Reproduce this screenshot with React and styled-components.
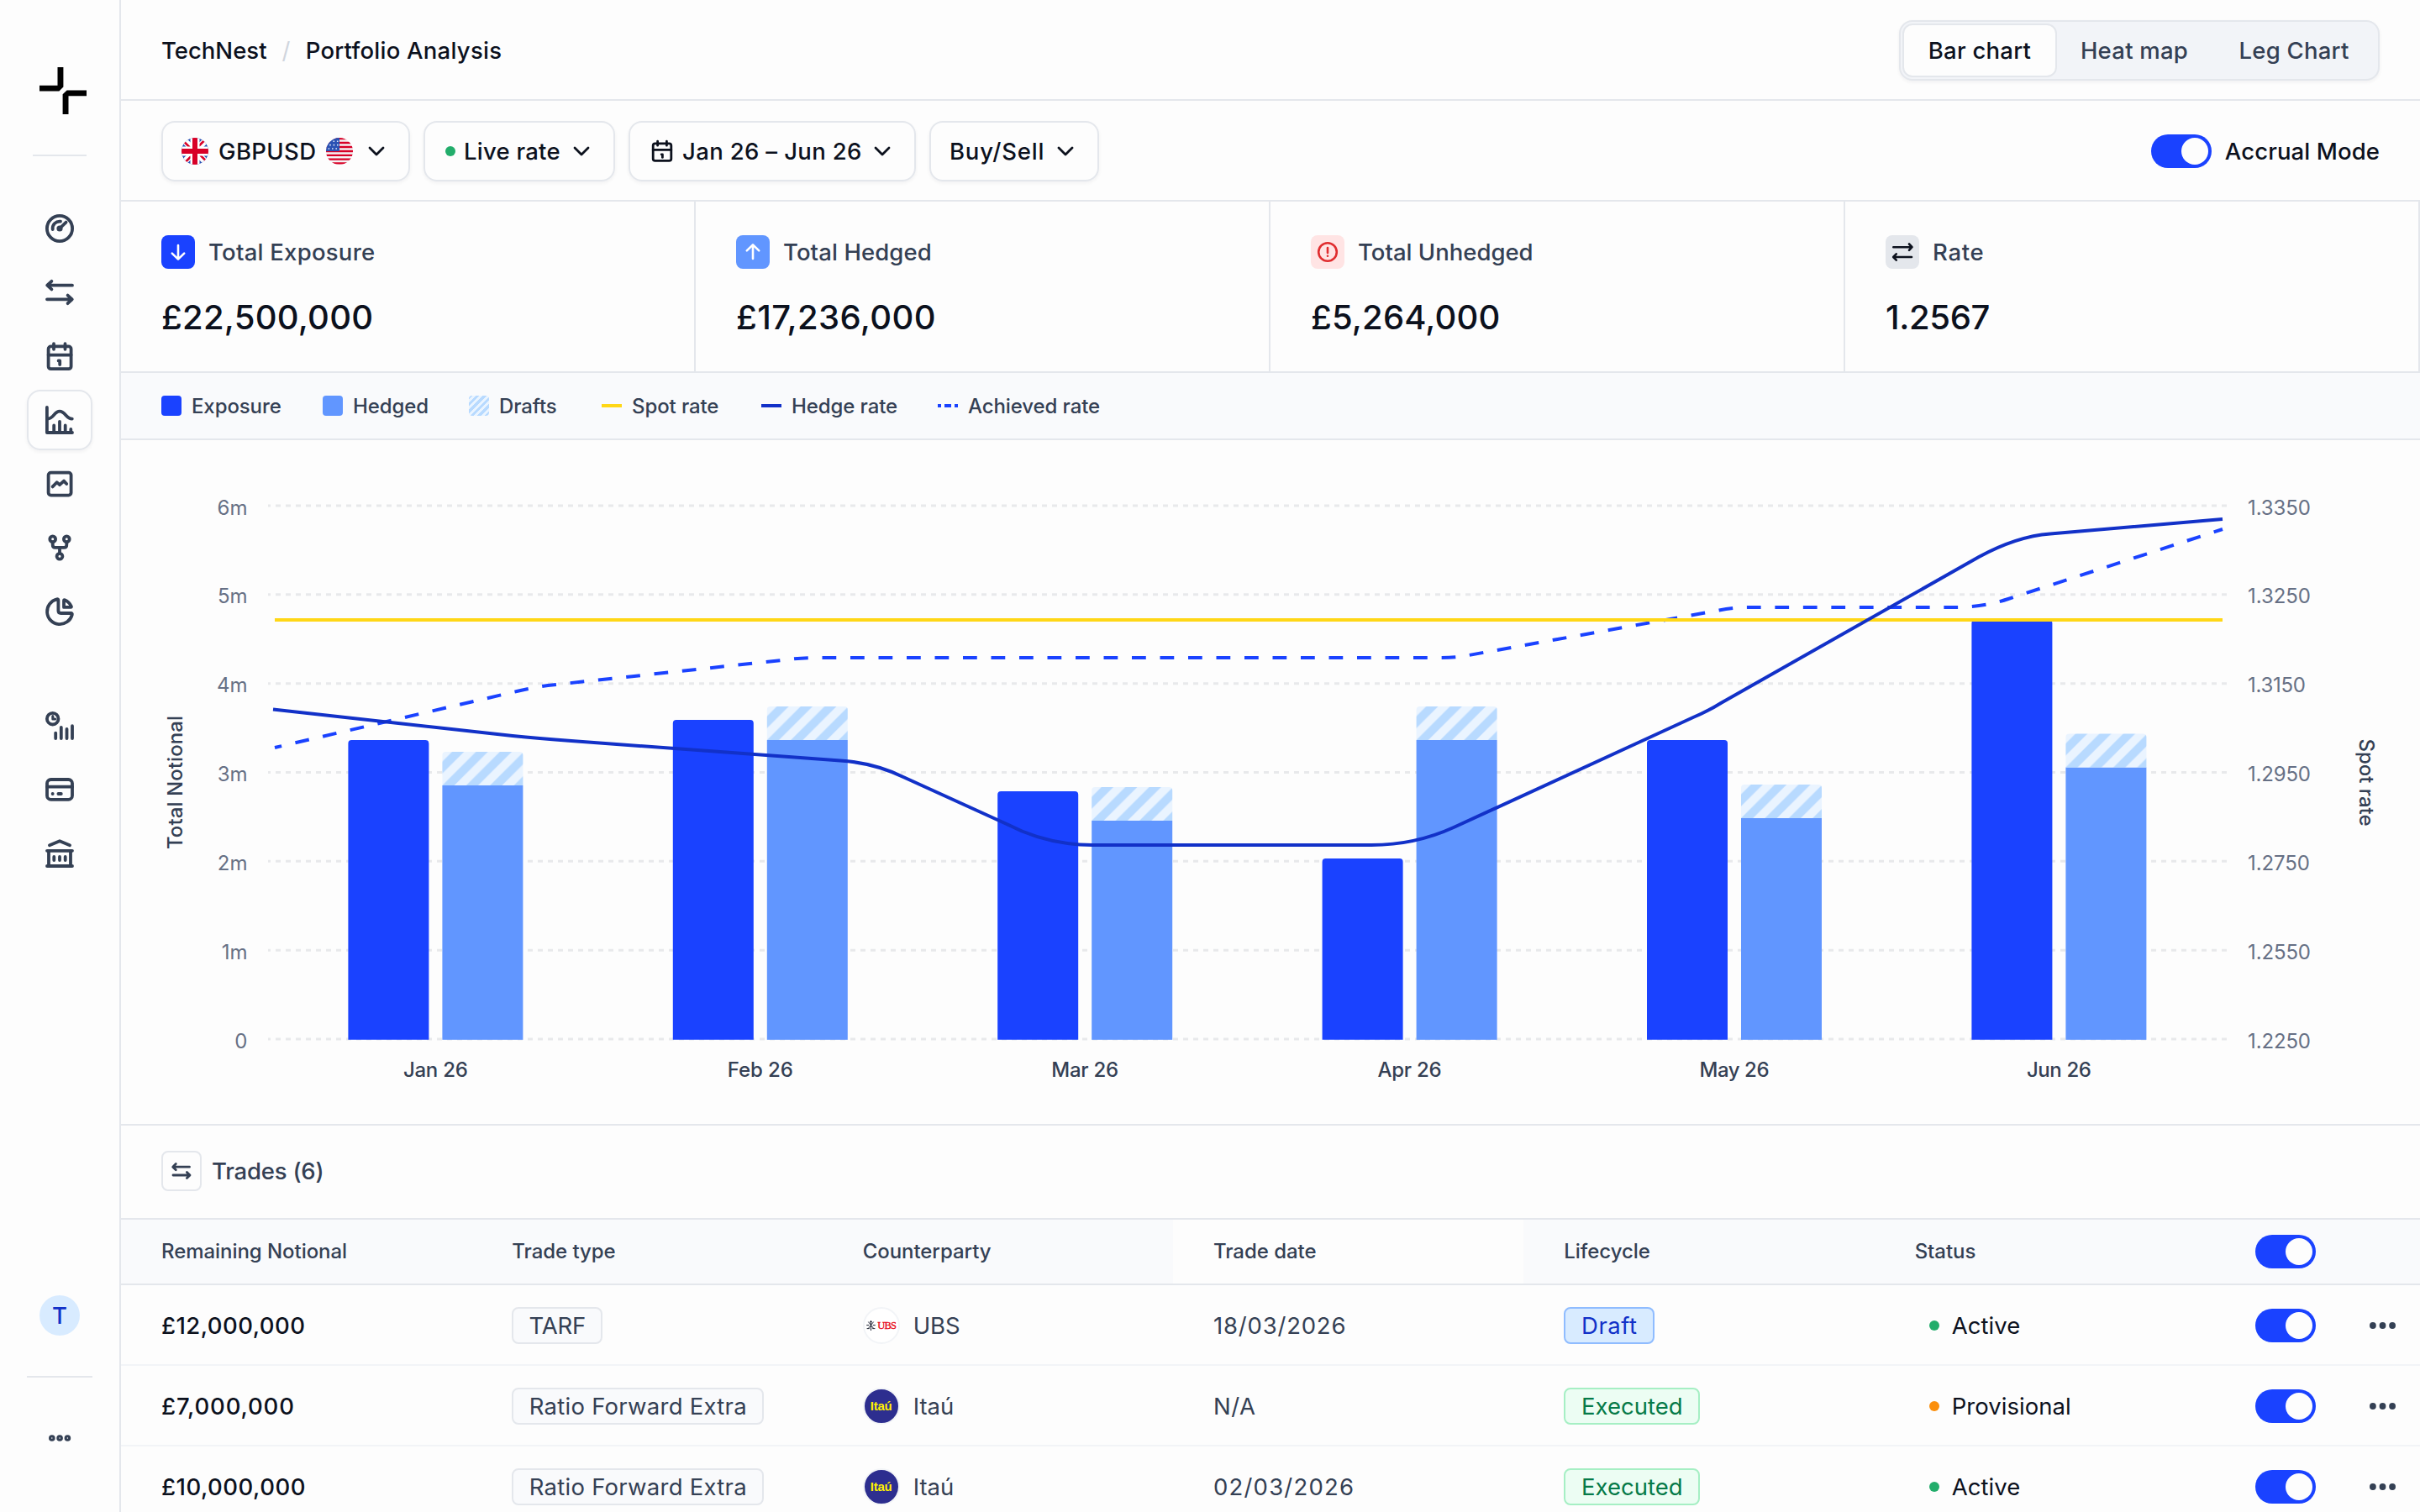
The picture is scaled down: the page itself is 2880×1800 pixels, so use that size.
import React from "react";
import styled, { createGlobalStyle, css } from "styled-components";

const c = {
  bg: "#fdfdfd",
  line: "#e4e7ec",
  soft: "#f2f4f7",
  panel: "#f9fafc",
  ink: "#0c111d",
  text: "#344054",
  muted: "#667085",
  blue: "#1a42ff",
  deep: "#1231c8",
  sky: "#6196ff",
  green: "#22ad6b",
  orange: "#fb8f0c",
  yellow: "#ffd716",
};

const Global = createGlobalStyle`
  * { box-sizing: border-box; }
  html, body { margin: 0; background: ${c.bg}; }
  body {
    font-family: Inter, "Liberation Sans", sans-serif;
    font-size: 28px;
    line-height: 36px;
    color: ${c.text};
    overflow: hidden;
  }
  svg { display: block; flex: none; }
`;

const Page = styled.div`
  display: grid;
  grid-template-columns: 144px 1fr;
  width: 2880px;
  height: 1800px;
  overflow: hidden;
`;

const T = styled.span`
  white-space: nowrap;
  font-weight: ${(p) => p.$w || 400};
  font-size: ${(p) => p.$size || 27.5}px;
  letter-spacing: ${(p) => p.$ls ?? 0.25}px;
  color: ${(p) => p.$color || "inherit"};
`;

/* ---------- Sidebar ---------- */

const Sidebar = styled.nav`
  display: flex;
  flex-direction: column;
  align-items: center;
  border-right: 2px solid ${c.line};
  height: 1800px;
`;

const LogoBox = styled.div`
  padding: 80px 0 48px 8px;
`;

const Rule = styled.div`
  width: ${(p) => p.$width}px;
  height: 2px;
  background: ${c.line};
`;

const NavList = styled.div`
  display: flex;
  flex-direction: column;
  align-items: center;
  gap: 4px;
  margin-top: ${(p) => p.$top}px;
`;

const NavItem = styled.div`
  display: flex;
  align-items: center;
  justify-content: center;
  width: 78px;
  height: 72px;
  border-radius: 16px;
  border: 2px solid transparent;
  ${(p) =>
    p.$active &&
    css`
      border-color: ${c.line};
      box-shadow: 0 2px 4px rgba(16, 24, 40, 0.05);
    `}
`;

const Avatar = styled.div`
  display: flex;
  align-items: center;
  justify-content: center;
  width: 48px;
  height: 48px;
  margin: auto 0 48px;
  border-radius: 50%;
  background: #d8ebff;
`;

const MoreBox = styled.div`
  padding: 64px 0 80px;
`;

const Stroke = ({ size = 40, w = 3.8, color = c.text, children, box = size }) => (
  <svg
    width={size}
    height={size}
    viewBox={`0 0 ${box} ${box}`}
    fill="none"
    stroke={color}
    strokeWidth={w}
    strokeLinecap="round"
    strokeLinejoin="round"
  >
    {children}
  </svg>
);

const navIcons = {
  gauge: (
    <>
      <circle cx="20" cy="20" r="15.1" />
      <path d="M11.7 21c-.6-5.4 3.6-10 9.3-9.4" />
      <path d="M21 19l6.6-6.4" />
      <circle cx="20" cy="20" r="1.7" />
    </>
  ),
  swap: (
    <>
      <path d="M35 11.7H5.4M10.4 6.8L5.2 11.7l5.2 4.7" />
      <path d="M5 28.3h29.6M29.6 23.6l5.2 4.7-5.2 4.9" />
    </>
  ),
  calendar: (
    <>
      <rect x="6.6" y="8.4" width="27" height="26.8" rx="3" />
      <path d="M6.6 18.6h27M13 5.2v6.6M26.5 5.2v6.6M18.6 25.4h1.6V30" />
    </>
  ),
  chart: (
    <>
      <path d="M4.9 5v30H35" />
      <path d="M5.6 18.6c7.6 0 7.6-9 14.4-9 6.6 0 7.6 9 14.8 9" />
      <path d="M13.2 26.5V34M20 21.8V34M26.7 26.5V34M33.3 31V34" />
    </>
  ),
  picture: (
    <>
      <rect x="6.6" y="6.6" width="27" height="27" rx="3" />
      <path d="M11.6 23.4l5-5.2 3.4 3 5-4.6 3.2 3.4" />
    </>
  ),
  fork: (
    <>
      <circle cx="11.7" cy="9.7" r="3.4" />
      <circle cx="28.3" cy="9.7" r="3.4" />
      <circle cx="20" cy="30.3" r="3.4" />
      <path d="M11.7 13.5v3.2q0 3.1 3.1 3.1h10.4q3.1 0 3.1-3.1v-3.2M20 20v6.5" />
    </>
  ),
  pie: (
    <>
      <path d="M18.4 6.6v12.4q0 3 3 3h12q1.8 0 1.4 1.7A15.1 15.1 0 1 1 16.7 5.3q1.7-.4 1.7 1.3z" />
      <path d="M25 7.2v7.7h8.2q1 0 .7-1a15 15 0 0 0-7.8-7.7q-1.1-.4-1.1 1z" />
    </>
  ),
  usage: (
    <>
      <circle cx="11.7" cy="11.7" r="6.8" />
      <path strokeWidth="3" d="M11.8 8.6v3.5h2.8" />
      <path d="M15.2 28.6V35M21.8 21.8V35M28.5 23.8V35M35 20.2V35" />
    </>
  ),
  card: (
    <>
      <rect x="5" y="8" width="30" height="23.8" rx="4.6" />
      <path d="M5 16.7h30M11.6 25h.1M18.4 25h3.4" />
    </>
  ),
  bank: (
    <>
      <path d="M8 10.2l12-5 12 5M5 16.8h30M5 35h30M7 17v18M33 17v18M13.3 24v4M20 24v4M26.7 24v4" />
    </>
  ),
};

const Dots = ({ gap, r, w, hole }) => (
  <svg width={gap * 2 + r * 2 + w + 2} height="16">
    {[0, 1, 2].map((i) => (
      <circle
        key={i}
        cx={1 + r + w / 2 + i * gap}
        cy="8"
        r={r}
        fill={hole ? "none" : c.text}
        stroke={c.text}
        strokeWidth={w}
      />
    ))}
  </svg>
);

/* ---------- Header & filters ---------- */

const Main = styled.main`
  display: flex;
  flex-direction: column;
  min-width: 0;
`;

const Bar = styled.div`
  display: flex;
  align-items: center;
  justify-content: space-between;
  height: 120px;
  flex: none;
  padding: 2px 48px 0;
  border-bottom: 2px solid ${c.line};
`;

const Crumbs = styled.div`
  display: flex;
  align-items: center;
  gap: 18px;
`;

const Segments = styled.div`
  display: grid;
  grid-template-columns: 184px 184px 196px;
  width: 572px;
  height: 72px;
  padding: 2px;
  border: 2px solid ${c.line};
  border-radius: 16px;
  background: #f2f4f8;
  box-shadow: 0 2px 4px rgba(16, 24, 40, 0.05);
`;

const Segment = styled.div`
  display: flex;
  align-items: center;
  justify-content: center;
  border-radius: 12px;
  border: 2px solid ${(p) => (p.$active ? c.line : "transparent")};
  background: ${(p) => (p.$active ? c.bg : "transparent")};
`;

const Filters = styled.div`
  display: flex;
  gap: 16px;
`;

const FilterButton = styled.div`
  display: flex;
  align-items: center;
  gap: ${(p) => p.$gap || 12}px;
  width: ${(p) => p.$width}px;
  height: 72px;
  padding: 0 22px;
  border: 2px solid ${c.line};
  border-radius: 16px;
  box-shadow: 0 2px 4px rgba(16, 24, 40, 0.05);
`;

const ChevronBox = styled.span`
  margin-left: auto;
`;

const Dot = styled.span`
  width: 12px;
  height: 12px;
  flex: none;
  margin: 0 2px;
  border-radius: 50%;
  background: ${(p) => p.$color};
`;

const ModeBox = styled.div`
  display: flex;
  align-items: center;
  gap: 16px;
`;

const Track = styled.span`
  display: flex;
  justify-content: flex-end;
  width: 72px;
  height: 40px;
  padding: 4px;
  border-radius: 20px;
  background: ${c.blue};
`;

const Knob = styled.span`
  width: 32px;
  height: 32px;
  border-radius: 50%;
  background: ${c.bg};
`;

const Toggle = () => (
  <Track>
    <Knob />
  </Track>
);

const Chevron = () => (
  <ChevronBox>
    <Stroke size={32} w={2.8} color={c.ink}>
      <path d="M8 12l8 8 8-8" />
    </Stroke>
  </ChevronBox>
);

const FlagGB = () => (
  <svg width="32" height="32" viewBox="0 0 32 32">
    <defs>
      <clipPath id="gb">
        <circle cx="16" cy="16" r="16" />
      </clipPath>
    </defs>
    <g clipPath="url(#gb)">
      <path fill="#2a52b4" d="M0 0h32v32H0z" />
      <path stroke="#fff" strokeWidth="7.4" d="M0 0l32 32M32 0L0 32" />
      <path stroke="#d80027" strokeWidth="2.6" d="M0 1.6l13 13M30.4 0l-13 13M32 30.4l-13-13M1.6 32l13-13" />
      <path stroke="#fff" strokeWidth="11" d="M16 0v32M0 16h32" />
      <path stroke="#d80027" strokeWidth="6" d="M16 0v32M0 16h32" />
    </g>
  </svg>
);

const FlagUS = () => (
  <svg width="32" height="32" viewBox="0 0 32 32">
    <defs>
      <clipPath id="us">
        <circle cx="16" cy="16" r="16" />
      </clipPath>
    </defs>
    <g clipPath="url(#us)">
      <path fill="#f4f4f6" d="M0 0h32v32H0z" />
      <path
        stroke="#d80027"
        strokeWidth="2.3"
        d="M0 1.1h32M0 6h32M0 11h32M0 16h32M0 20.8h32M0 25.6h32M0 30.3h32"
      />
      <path fill="#2a52b4" d="M0 0h16v16H0z" />
      <path
        stroke="#dfe6f6"
        strokeWidth="1.6"
        strokeDasharray="1.6 2.8"
        d="M8.5 4.2h7M4.2 8.6h11M2.6 13h13"
      />
    </g>
  </svg>
);

/* ---------- KPI ---------- */

const Kpis = styled.section`
  display: grid;
  grid-template-columns: repeat(4, 684px);
  height: 204px;
  flex: none;
  border-bottom: 2px solid ${c.line};
`;

const Kpi = styled.div`
  display: flex;
  flex-direction: column;
  gap: 32px;
  padding: 40px 48px 0;
  border-right: 2px solid ${c.line};
`;

const KpiHead = styled.div`
  display: flex;
  align-items: center;
  gap: 16px;
  height: 40px;
`;

const KpiIcon = styled.span`
  width: 40px;
  height: 40px;
  border-radius: 8px;
  background: ${(p) => p.$bg};
`;

const KpiValue = styled(T)`
  line-height: 52px;
`;

const kpis = [
  {
    label: "Total Exposure",
    value: "£22,500,000",
    ls: 0.25,
    vls: 0.25,
    bg: c.blue,
    color: "#fff",
    icon: <path d="M20 12v16.5M12.8 21.6l7.2 7 7.2-7" />,
  },
  {
    label: "Total Hedged",
    value: "£17,236,000",
    ls: 0.1,
    vls: 0.4,
    bg: c.sky,
    color: "#fff",
    icon: <path d="M20 28V11.5M12.8 18.4l7.2-7 7.2 7" />,
  },
  {
    label: "Total Unhedged",
    value: "£5,264,000",
    ls: 0,
    vls: 0.15,
    bg: "#ffe4e4",
    color: "#e02d2f",
    icon: (
      <>
        <circle cx="20" cy="20" r="10.8" />
        <path d="M20 15v6M20 24.7v.1" />
      </>
    ),
  },
  {
    label: "Rate",
    value: "1.2567",
    ls: 0.7,
    vls: -0.35,
    bg: "#e4e7ec",
    color: c.ink,
    icon: <path d="M9.3 14.2h22M28 10.5l3.5 3.7-3.5 3.7M31 26h-21.7M12.7 22.3L9.2 26l3.5 3.7" />,
  },
];

/* ---------- Legend ---------- */

const Legend = styled.div`
  display: grid;
  grid-template-columns: 192px 174px 158px 190px 210px auto;
  align-items: center;
  height: 80px;
  flex: none;
  padding: 0 48px;
  background: ${c.panel};
  border-bottom: 2px solid ${c.line};
`;

const LegendItem = styled.div`
  display: flex;
  align-items: center;
  gap: 12px;
`;

const LegendLabel = styled(T)`
  padding-top: 2px;
`;

const Swatch = styled.span`
  width: 24px;
  height: ${(p) => (p.$thin ? 4 : 24)}px;
  border-radius: ${(p) => (p.$thin ? 0 : 4)}px;
  background: ${(p) => p.$fill};
`;

const legend = [
  ["Exposure", c.blue],
  ["Hedged", c.sky],
  ["Drafts", "repeating-linear-gradient(135deg, #b8daff 0 3px, #eaf4ff 3px 6px)"],
  ["Spot rate", c.yellow, true],
  ["Hedge rate", c.deep, true],
  [
    "Achieved rate",
    `linear-gradient(90deg, ${c.blue} 4px, transparent 4px 8px, ${c.blue} 8px 16px, transparent 16px 20px, ${c.blue} 20px)`,
    true,
  ],
];

/* ---------- Chart ---------- */

const ChartPanel = styled.section`
  height: 816px;
  flex: none;
  border-bottom: 2px solid ${c.line};
`;

const SvgText = styled.text`
  font-size: 24px;
  font-weight: ${(p) => p.$w || 400};
  fill: ${(p) => p.$fill || c.muted};
`;

const bars = [
  { m: "Jan 26", w: 77, e: 881, d: 895 },
  { m: "Feb 26", w: 78, e: 857, d: 841 },
  { m: "Mar 26", w: 80, e: 942, d: 937 },
  { m: "Apr 26", w: 76, e: 1022, d: 841 },
  { m: "May 26", w: 83, e: 881, d: 934 },
  { m: "Jun 26", w: 77, e: 738, d: 873.5 },
];
const ticks = [
  ["6m", "1.3350", 75],
  ["5m", "1.3250", 75],
  ["4m", "1.3150", 69],
  ["3m", "1.2950", 75],
  ["2m", "1.2750", 74],
  ["1m", "1.2550", 75],
  ["0", "1.2250", 75],
];

const Chart = () => (
  <svg width="2736" height="814" viewBox="144 524 2736 814">
    <defs>
      <pattern id="draft" width="28.4" height="28.4" patternUnits="userSpaceOnUse">
        <path fill="#b8daff" d="M0 0h28.4v28.4H0z" />
        <path
          fill="#eaf4ff"
          d="M14.2 0H28.4L0 28.4V14.2zM28.4 14.2V28.4H14.2z"
        />
      </pattern>
    </defs>
    {ticks.map(([l, r, w], i) => {
      const y = 602 + i * 105.83;
      return (
        <g key={l}>
          <path
            d={`M319 ${y}H2651`}
            stroke="#e8e9eb"
            strokeWidth="3"
            strokeDasharray="6 6"
            strokeDashoffset="3"
          />
          <SvgText x="294.5" y={y + 10.6} textAnchor="end">
            {l}
          </SvgText>
          <SvgText x="2675" y={y + 10.6} textLength={w}>
            {r}
          </SvgText>
        </g>
      );
    })}
    {bars.map((b, i) => {
      const x = 414.4 + i * 386.4;
      return (
        <g key={b.m}>
          <path
            fill={c.blue}
            d={`M${x} 1237.8V${b.e + 4}q0-4 4-4h88q4 0 4 4V1237.8z`}
          />
          <rect x={x + 112} y={b.d + 40} width="96" height={1197.8 - b.d} fill={c.sky} />
          <g transform={`translate(${x + 112} ${b.d + 40})`}>
            <path fill="url(#draft)" d="M0 0V-36q0-4 4-4h88q4 0 4 4V0z" />
          </g>
          <SvgText
            x={x + 104 - b.w / 2}
            y="1282.4"
            $w={450}
            $fill={c.text}
            textLength={b.w}
          >
            {b.m}
          </SvgText>
        </g>
      );
    })}
    <g fill="none" strokeWidth="4">
      <path
        stroke={c.blue}
        strokeDasharray="16.75 16.75"
        strokeDashoffset="8.4"
        d="M327 890L615 823Q632 819 652 816L942 784.7Q956 783 970 783H1712Q1732 783 1748 780L2046 726.5Q2064 723 2080 723H2330Q2362 722.5 2390 713L2645 630"
      />
      <path stroke={c.yellow} d="M327 738H2645" />
      <path
        stroke={c.deep}
        d="M325 844.5L610 876Q640 879 680 882L1000 905.5Q1040 908 1075 925L1198 981Q1246 1006 1300 1006H1632Q1684 1006 1730 985L2015 854Q2032 847 2048 837L2355 663Q2400 638.5 2440 635.5L2645 618"
      />
    </g>
    <SvgText
      $w={450}
      $fill={c.text}
      textLength="159"
      transform="translate(216.5 1011) rotate(-90)"
    >
      Total Notional
    </SvgText>
    <SvgText
      $w={450}
      $fill={c.text}
      textLength="104"
      transform="translate(2807.5 879.5) rotate(90)"
    >
      Spot rate
    </SvgText>
  </svg>
);

/* ---------- Trades ---------- */

const TradesHead = styled.div`
  display: flex;
  align-items: center;
  gap: 12px;
  height: 112px;
  flex: none;
  padding: 0 48px 2px;
  border-bottom: 2px solid ${c.line};
`;

const TradesIcon = styled.span`
  display: flex;
  width: 48px;
  height: 48px;
  border: 2px solid ${c.line};
  border-radius: 8px;
  align-items: center;
  justify-content: center;
`;

const Row = styled.div`
  display: grid;
  grid-template-columns: repeat(6, 417.333px) 144px 88px;
  flex: none;
  height: ${(p) => (p.$head ? 78 : 96)}px;
  padding-top: ${(p) => (p.$head ? 0 : 2)}px;
  background: ${(p) => (p.$head ? c.panel : "transparent")};
  border-bottom: 2px solid ${(p) => (p.$head ? c.line : c.soft)};
`;

const Cell = styled.div`
  display: flex;
  align-items: center;
  gap: ${(p) => p.$gap || 16}px;
  padding-left: ${(p) => (p.$center ? 0 : p.$pad || 48)}px;
  justify-content: ${(p) => (p.$center ? "center" : "flex-start")};
  background: ${(p) => (p.$plain ? c.bg : "transparent")};
`;

const tones = {
  neutral: ["#f9fafc", c.line, c.text],
  draft: ["#d8ebff", "#8fbcff", c.deep],
  executed: ["#ecfdf3", "#a6efc4", "#067a48"],
};

const Tag = styled.span`
  display: flex;
  align-items: center;
  justify-content: center;
  width: ${(p) => p.$width}px;
  height: 44px;
  border-radius: 8px;
  background: ${(p) => tones[p.$tone][0]};
  border: 2px solid ${(p) => tones[p.$tone][1]};
  color: ${(p) => tones[p.$tone][2]};
`;

const BankLogo = styled.span`
  display: flex;
  align-items: center;
  justify-content: center;
  gap: 2px;
  width: 44px;
  height: 44px;
  flex: none;
  border-radius: 50%;
  border: 2px solid ${c.soft};
  background: ${(p) => p.$bg};
`;

const UbsWord = styled.span`
  font: 400 12.5px/12px "Liberation Serif", serif;
  letter-spacing: -0.9px;
  color: #e60012;
  -webkit-text-stroke: 0.3px #e60012;
`;

const ItauWord = styled.span`
  font: 700 15px/16px "Liberation Sans", sans-serif;
  letter-spacing: -0.2px;
  color: #fff200;
`;

const Ubs = () => (
  <BankLogo $bg="#fff">
    <svg width="11" height="12" viewBox="0 0 11 12" stroke="#1b2030" strokeWidth="1" fill="none">
      <path d="M5.5 0v12M2.4 1.6l6 7.6M8.6 1.6l-6 7.6M.2 5.6h3M7.8 5.6h3M.6 9.6h3.2M7.2 9.6h3.2M4.2 1.6h2.6" />
    </svg>
    <UbsWord>UBS</UbsWord>
  </BankLogo>
);

const Itau = () => (
  <BankLogo $bg="#2d2e8f">
    <ItauWord>Itaú</ItauWord>
  </BankLogo>
);

const trades = [
  {
    amount: ["£12,000,000", 0.45],
    type: ["TARF", -0.2, 108],
    bank: "UBS",
    date: ["18/03/2026", 0.8],
    stage: "Draft",
    status: "Active",
  },
  {
    amount: ["£7,000,000", 0.85],
    type: ["Ratio Forward Extra", 0.25, 300],
    bank: "Itaú",
    date: ["N/A", 0.5],
    stage: "Executed",
    status: "Provisional",
  },
  {
    amount: ["£10,000,000", 0.5],
    type: ["Ratio Forward Extra", 0.25, 300],
    bank: "Itaú",
    date: ["02/03/2026", 1.2],
    stage: "Executed",
    status: "Active",
  },
];

const columns = ["Remaining Notional", "Trade type", "Counterparty", "Trade date", "Lifecycle", "Status"];

export default function App() {
  return (
    <>
      <Global />
      <Page>
        <Sidebar>
          <LogoBox>
            <svg width="56" height="56" viewBox="47 80 56 56">
              <path d="M68.5 80h6.9v23.5l-5 5H47v-6.8h21.5z" />
              <path d="M103 107.4v6.9H81.5V136h-6.9v-23.7l5-4.9z" />
            </svg>
          </LogoBox>
          <Rule $width={64} />
          <NavList $top={50}>
            {["gauge", "swap", "calendar", "chart", "picture", "fork", "pie"].map((n) => (
              <NavItem key={n} $active={n === "chart"}>
                <Stroke>{navIcons[n]}</Stroke>
              </NavItem>
            ))}
          </NavList>
          <NavList $top={64}>
            {["usage", "card", "bank"].map((n) => (
              <NavItem key={n}>
                <Stroke>{navIcons[n]}</Stroke>
              </NavItem>
            ))}
          </NavList>
          <Avatar>
            <T $w={450} $ls={0} $color={c.deep}>T</T>
          </Avatar>
          <Rule $width={78} />
          <MoreBox>
            <Dots gap={9.3} r={2.3} w={3} hole />
          </MoreBox>
        </Sidebar>
        <Main>
          <Bar>
            <Crumbs>
              <T $w={450} $ls={0} $color={c.ink}>TechNest</T>
              <T $color="#d0d5dd">/</T>
              <T $w={450} $color={c.ink}>Portfolio Analysis</T>
            </Crumbs>
            <Segments>
              <Segment $active>
                <T $w={450} $color={c.ink}>Bar chart</T>
              </Segment>
              <Segment>
                <T $w={450}>Heat map</T>
              </Segment>
              <Segment>
                <T $w={450}>Leg Chart</T>
              </Segment>
            </Segments>
          </Bar>
          <Bar>
            <Filters>
              <FilterButton $width={296}>
                <FlagGB />
                <T $w={450} $ls={0.35} $color={c.ink}>GBPUSD</T>
                <FlagUS />
                <Chevron />
              </FilterButton>
              <FilterButton $width={228} $gap={8}>
                <Dot $color={c.green} />
                <T $w={450} $color={c.ink}>Live rate</T>
                <Chevron />
              </FilterButton>
              <FilterButton $width={342} $gap={8}>
                <Stroke size={32} w={2.8} color={c.ink}>
                  <rect x="5.2" y="6.8" width="21.6" height="20.6" rx="2.4" />
                  <path d="M5.2 14.4h21.6M10.6 4.2v5M21.4 4.2v5M15.2 19.8h1.2v3.6" />
                </Stroke>
                <T $w={450} $ls={0.35} $color={c.ink}>Jan 26 – Jun 26</T>
                <Chevron />
              </FilterButton>
              <FilterButton $width={202} $gap={4}>
                <T $w={450} $ls={0.8} $color={c.ink}>Buy/Sell</T>
                <Chevron />
              </FilterButton>
            </Filters>
            <ModeBox>
              <Toggle />
              <T $w={450} $ls={0.1} $color={c.ink}>Accrual Mode</T>
            </ModeBox>
          </Bar>
          <Kpis>
            {kpis.map((k) => (
              <Kpi key={k.label}>
                <KpiHead>
                  <KpiIcon $bg={k.bg}>
                    <Stroke w={2.6} color={k.color}>{k.icon}</Stroke>
                  </KpiIcon>
                  <T $w={450} $ls={k.ls}>{k.label}</T>
                </KpiHead>
                <KpiValue $w={500} $size={40} $ls={k.vls} $color={c.ink}>{k.value}</KpiValue>
              </Kpi>
            ))}
          </Kpis>
          <Legend>
            {legend.map(([label, fill, thin]) => (
              <LegendItem key={label}>
                <Swatch $fill={fill} $thin={thin} />
                <LegendLabel $w={450} $size={24} $ls={-0.1}>{label}</LegendLabel>
              </LegendItem>
            ))}
          </Legend>
          <ChartPanel>
            <Chart />
          </ChartPanel>
          <TradesHead>
            <TradesIcon>
              <Stroke size={44} w={2.8}>
                <path d="M31.5 17.2H12M15.3 13.6l-3.6 3.6 3.6 3.6M12 27h19.5M28.4 23.4L32 27l-3.6 3.6" />
              </Stroke>
            </TradesIcon>
            <T $w={450} $ls={-0.2}>Trades (6)</T>
          </TradesHead>
          <Row $head>
            {columns.map((h) => (
              <Cell key={h} $plain={h === "Trade date"}>
                <T $w={450} $size={24} $ls={-0.05}>{h}</T>
              </Cell>
            ))}
            <Cell $center>
              <Toggle />
            </Cell>
          </Row>
          {trades.map(({ amount, type, bank, date, stage, status }) => (
            <Row key={amount[0]}>
              <Cell>
                <T $w={500} $ls={amount[1]} $color={c.ink}>{amount[0]}</T>
              </Cell>
              <Cell>
                <Tag $tone="neutral" $width={type[2]}>
                  <T $ls={type[1]}>{type[0]}</T>
                </Tag>
              </Cell>
              <Cell>
                {bank === "UBS" ? <Ubs /> : <Itau />}
                <T $ls={0}>{bank}</T>
              </Cell>
              <Cell>
                <T $ls={date[1]}>{date[0]}</T>
              </Cell>
              <Cell>
                <Tag
                  $tone={stage === "Draft" ? "draft" : "executed"}
                  $width={stage === "Draft" ? 108 : 162}
                >
                  <T $ls={stage === "Draft" ? 0.5 : 0}>{stage}</T>
                </Tag>
              </Cell>
              <Cell $pad={63} $gap={13}>
                <Dot $color={status === "Active" ? c.green : c.orange} />
                <T $ls={0.05} $color={c.ink}>{status}</T>
              </Cell>
              <Cell $center>
                <Toggle />
              </Cell>
              <Cell $center>
                <Dots gap={11.6} r={2.9} w={2} />
              </Cell>
            </Row>
          ))}
        </Main>
      </Page>
    </>
  );
}
